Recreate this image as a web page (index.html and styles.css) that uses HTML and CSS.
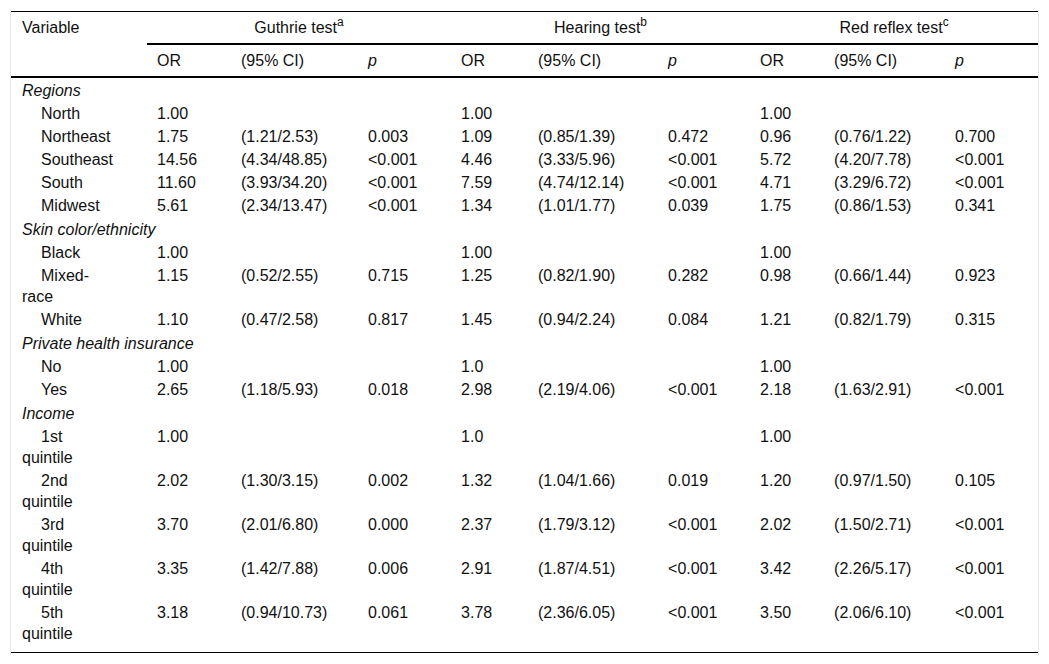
FILE: index.html
```html
<!DOCTYPE html>
<html lang="en">
<head>
<meta charset="utf-8">
<title>Table</title>
<link rel="stylesheet" href="styles.css">
</head>
<body>
<div class="wrap">
<table class="tbl">
<colgroup>
<col class="c-var"><col class="c-or1"><col class="c-ci1"><col class="c-p1">
<col class="c-or2"><col class="c-ci2"><col class="c-p2">
<col class="c-or3"><col class="c-ci3"><col class="c-p3">
</colgroup>
<thead>
<tr class="h1">
<th class="var">Variable</th>
<th colspan="3" class="grp">Guthrie test<sup>a</sup></th>
<th colspan="3" class="grp">Hearing test<sup>b</sup></th>
<th colspan="3" class="grp">Red reflex test<sup>c</sup></th>
</tr>
<tr class="h2">
<th class="var"></th>
<th>OR</th><th>(95% CI)</th><th><i>p</i></th>
<th>OR</th><th>(95% CI)</th><th><i>p</i></th>
<th>OR</th><th>(95% CI)</th><th><i>p</i></th>
</tr>
</thead>
<tbody>
<tr class="cat"><td colspan="10"><i>Regions</i></td></tr>
<tr><td class="sub">North</td><td>1.00</td><td></td><td></td><td>1.00</td><td></td><td></td><td>1.00</td><td></td><td></td></tr>
<tr><td class="sub">Northeast</td><td>1.75</td><td>(1.21/2.53)</td><td>0.003</td><td>1.09</td><td>(0.85/1.39)</td><td>0.472</td><td>0.96</td><td>(0.76/1.22)</td><td>0.700</td></tr>
<tr><td class="sub">Southeast</td><td>14.56</td><td>(4.34/48.85)</td><td>&lt;0.001</td><td>4.46</td><td>(3.33/5.96)</td><td>&lt;0.001</td><td>5.72</td><td>(4.20/7.78)</td><td>&lt;0.001</td></tr>
<tr><td class="sub">South</td><td>11.60</td><td>(3.93/34.20)</td><td>&lt;0.001</td><td>7.59</td><td>(4.74/12.14)</td><td>&lt;0.001</td><td>4.71</td><td>(3.29/6.72)</td><td>&lt;0.001</td></tr>
<tr><td class="sub">Midwest</td><td>5.61</td><td>(2.34/13.47)</td><td>&lt;0.001</td><td>1.34</td><td>(1.01/1.77)</td><td>0.039</td><td>1.75</td><td>(0.86/1.53)</td><td>0.341</td></tr>
<tr class="cat"><td colspan="10"><i>Skin color/ethnicity</i></td></tr>
<tr><td class="sub">Black</td><td>1.00</td><td></td><td></td><td>1.00</td><td></td><td></td><td>1.00</td><td></td><td></td></tr>
<tr><td class="sub">Mixed-race</td><td>1.15</td><td>(0.52/2.55)</td><td>0.715</td><td>1.25</td><td>(0.82/1.90)</td><td>0.282</td><td>0.98</td><td>(0.66/1.44)</td><td>0.923</td></tr>
<tr><td class="sub">White</td><td>1.10</td><td>(0.47/2.58)</td><td>0.817</td><td>1.45</td><td>(0.94/2.24)</td><td>0.084</td><td>1.21</td><td>(0.82/1.79)</td><td>0.315</td></tr>
<tr class="cat"><td colspan="10"><i>Private health insurance</i></td></tr>
<tr><td class="sub">No</td><td>1.00</td><td></td><td></td><td>1.0</td><td></td><td></td><td>1.00</td><td></td><td></td></tr>
<tr><td class="sub">Yes</td><td>2.65</td><td>(1.18/5.93)</td><td>0.018</td><td>2.98</td><td>(2.19/4.06)</td><td>&lt;0.001</td><td>2.18</td><td>(1.63/2.91)</td><td>&lt;0.001</td></tr>
<tr class="cat"><td colspan="10"><i>Income</i></td></tr>
<tr><td class="sub">1st quintile</td><td>1.00</td><td></td><td></td><td>1.0</td><td></td><td></td><td>1.00</td><td></td><td></td></tr>
<tr><td class="sub">2nd quintile</td><td>2.02</td><td>(1.30/3.15)</td><td>0.002</td><td>1.32</td><td>(1.04/1.66)</td><td>0.019</td><td>1.20</td><td>(0.97/1.50)</td><td>0.105</td></tr>
<tr><td class="sub">3rd quintile</td><td>3.70</td><td>(2.01/6.80)</td><td>0.000</td><td>2.37</td><td>(1.79/3.12)</td><td>&lt;0.001</td><td>2.02</td><td>(1.50/2.71)</td><td>&lt;0.001</td></tr>
<tr><td class="sub">4th quintile</td><td>3.35</td><td>(1.42/7.88)</td><td>0.006</td><td>2.91</td><td>(1.87/4.51)</td><td>&lt;0.001</td><td>3.42</td><td>(2.26/5.17)</td><td>&lt;0.001</td></tr>
<tr class="last"><td class="sub">5th quintile</td><td>3.18</td><td>(0.94/10.73)</td><td>0.061</td><td>3.78</td><td>(2.36/6.05)</td><td>&lt;0.001</td><td>3.50</td><td>(2.06/6.10)</td><td>&lt;0.001</td></tr>
</tbody>
</table>
</div>
</body>
</html>
```
FILE: styles.css
```css
html, body {
  margin: 0;
  padding: 0;
  background: #fff;
}
body {
  font-family: "Liberation Sans", Arial, sans-serif;
  font-size: 16px;
  color: #111;
}
.wrap {
  margin: 10px 0 0 10px;
  width: 1027px;
  padding: 1px 0 2px;
  border-left: 1px solid #e6e6e6;
  border-right: 1px solid #e6e6e6;
}
.tbl {
  width: 1027px;
  table-layout: fixed;
  border-collapse: separate;
  border-spacing: 0;
  border-top: 1px solid #000;
  border-bottom: 1px solid #000;
}
.c-var { width: 136px; }
.c-or1 { width: 84px; }
.c-ci1 { width: 127px; }
.c-p1 { width: 93px; }
.c-or2 { width: 77px; }
.c-ci2 { width: 130px; }
.c-p2 { width: 92px; }
.c-or3 { width: 74px; }
.c-ci3 { width: 121px; }
.c-p3 { width: 93px; }

.tbl th {
  font-weight: normal;
  text-align: left;
  line-height: 20.5px;
  padding: 6px 10px 4.5px;
  vertical-align: top;
}
.tbl th.var {
  padding-left: 11px;
}
.h1 th.grp {
  text-align: center;
  border-bottom: 2px solid #000;
}
.h2 th {
  padding: 5.5px 10px 5px;
  border-bottom: 2px solid #000;
}
.tbl sup {
  font-size: 12px;
  line-height: 0;
  vertical-align: 7px;
}
.tbl td {
  line-height: 21px;
  padding: 1px 10px;
  vertical-align: top;
  white-space: nowrap;
}
.tbl td.sub {
  white-space: normal;
  padding-left: 11px;
  padding-right: 32px;
  text-indent: 19px;
}
.cat td {
  padding: 2px 10px 1px 11px;
}
.last td {
  padding-bottom: 8px;
}
```
